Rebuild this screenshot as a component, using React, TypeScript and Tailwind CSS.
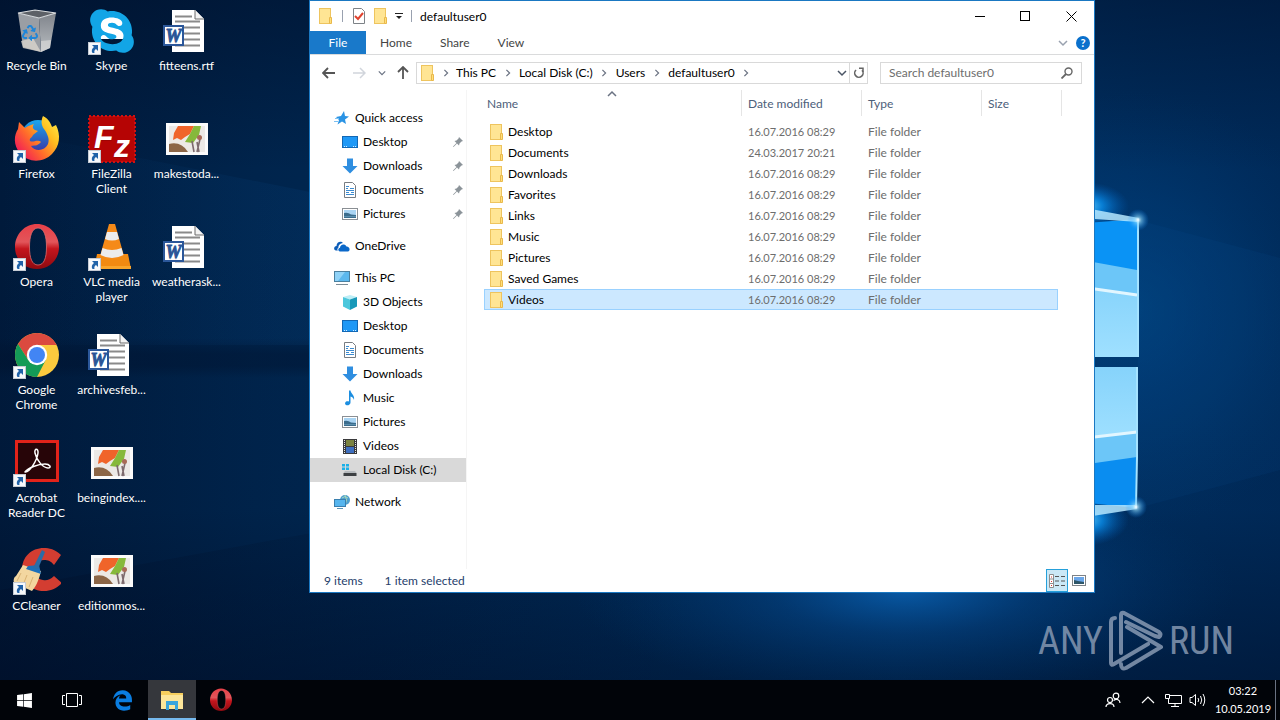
import { useState } from 'react';
import type { ReactNode } from 'react';
import { FaEdgeLegacy, FaRecycle, FaSkype, FaWindows } from 'react-icons/fa';

interface DesktopItem {
    label: string;
    icon: ReactNode;
    shortcut?: boolean;
}

interface NavItem {
    label: string;
    icon: ReactNode;
    top?: boolean;
    pinned?: boolean;
    spaced?: boolean;
}

/* ---------- Desktop icons (48x48) ---------- */

function RecycleBinIcon() {
    return (
        <div className="relative size-12">
            <svg viewBox="0 0 48 48" className="size-12">
                <defs>
                    <linearGradient id="binSide" x1="0" y1="0" x2="0" y2="1">
                        <stop offset="0" stopColor="#7f848b" />
                        <stop offset="1" stopColor="#b9bdc1" />
                    </linearGradient>
                </defs>
                <path d="M5 6 L26 11 L28 45 L10 40 Z" fill="#9a9ea4" />
                <path d="M26 11 L43 6 L37 41 L28 45 Z" fill="url(#binSide)" />
                <path d="M8 34 L20 31 L28 45 L10 41 Z" fill="#d9d5cd" opacity=".8" />
                <path d="M28 34 L38 33 L37 41 L28 45 Z" fill="#d8d8d8" opacity=".7" />
                <path d="M5 6 L22 3 L43 6 L26 11 Z" fill="#5d6167" stroke="#dadddf" strokeWidth="1.2" />
            </svg>
            <FaRecycle className="absolute top-[18px] left-[9px] size-4 text-[#1f86d9]" />
        </div>
    );
}

function SkypeIcon() {
    return (
        <div className="relative size-12">
            <div className="absolute top-2 left-3 size-6 bg-white" />
            <FaSkype className="absolute -top-px left-[-1px] size-[50px] text-[#12a5e6]" />
        </div>
    );
}

function WordIcon() {
    return (
        <svg viewBox="0 0 48 48" className="size-12">
            <path d="M9 3 H32 L41 12 V45 H9 Z" fill="#fff" />
            <path d="M32 3 V12 H41" fill="#f3f3f3" stroke="#6b6b6b" strokeWidth="1" />
            <path d="M12 9.5 H29 M12 14.5 H37 M21 20.5 H37 M21 26.5 H37 M21 32.5 H37 M12 38.5 H37" stroke="#8a8a8a" strokeWidth="2" />
            <rect x="1" y="19" width="19" height="19" fill="#fff" stroke="#2b579a" strokeWidth="2" />
            <text x="10.5" y="35" textAnchor="middle" fontFamily="Liberation Serif, serif" fontWeight="700" fontStyle="italic" fontSize="18" fill="#2b579a" stroke="#2b579a" strokeWidth=".8">W</text>
        </svg>
    );
}

function ThumbIcon() {
    return (
        <svg viewBox="0 0 48 48" className="size-12">
            <rect x="3" y="8" width="42" height="32" fill="#fbfbfb" />
            <rect x="6" y="11" width="36" height="26" fill="#ece9e6" />
            <path d="M15 11 H31 L27 19 L22 22 L18 25 L14 23 L10 25 L11 18 Z" fill="#f0642a" />
            <path d="M31 11 H38 L36 20 L30 28 L22 27 L27 19 Z" fill="#86b93b" />
            <path d="M6 29 Q18 26 25 37 H6 Z" fill="#8c6647" />
            <path d="M29 26 L31 37 M37 24 L34 37 M34 27 L36 37" stroke="#7d6a6e" strokeWidth="1.6" />
            <circle cx="36.5" cy="22.5" r="2.5" fill="#a86a56" />
        </svg>
    );
}

function FirefoxIcon() {
    return (
        <svg viewBox="0 0 48 48" className="size-12">
            <defs>
                <linearGradient id="foxBody" x1="1" y1="0" x2="0" y2=".8">
                    <stop offset="0" stopColor="#fff44f" />
                    <stop offset=".35" stopColor="#ffbd1f" />
                    <stop offset=".65" stopColor="#ff6a2b" />
                    <stop offset="1" stopColor="#f0125f" />
                </linearGradient>
                <linearGradient id="foxGlobe" x1="0" y1="0" x2="0" y2="1">
                    <stop offset="0" stopColor="#1aa7ee" />
                    <stop offset="1" stopColor="#3b2fa0" />
                </linearGradient>
            </defs>
            <circle cx="25" cy="22" r="17" fill="url(#foxGlobe)" />
            <path d="M30 1 C36 4 38 9 39 12 L43 10 C48 20 47 31 39 39 C30 48 15 48 7 38 C0 30 1 20 5 14 L6 7 L12 13 C14 11 18 10 21 9 C19 12 20 14 22 15 L25 16 L20 20 C19 23 16 23 17 26 C20 28 24 24 28 27 C24 32 20 30 18 31 C22 37 32 36 35 29 C37 24 34 18 31 14 C28 10 28 5 30 1 Z" fill="url(#foxBody)" />
        </svg>
    );
}

function FileZillaIcon() {
    return (
        <svg viewBox="0 0 48 48" className="size-12">
            <rect x="1" y="1" width="46" height="46" fill="#b50404" stroke="#d01212" strokeWidth="2" strokeDasharray="2 2" />
            <rect x="2" y="2" width="44" height="44" fill="#b50404" />
            <text x="6" y="33" fontFamily="Liberation Sans, sans-serif" fontWeight="700" fontStyle="italic" fontSize="32" fill="#fff">F</text>
            <text x="26" y="42" fontFamily="Liberation Sans, sans-serif" fontWeight="700" fontStyle="italic" fontSize="32" fill="#fff">z</text>
        </svg>
    );
}

function OperaIcon({ size }: { size: 'big' | 'small' }) {
    return (
        <svg viewBox="0 0 48 48" className={size === 'big' ? 'size-12' : 'size-6'}>
            <defs>
                <linearGradient id="operaRing" x1="0" y1="0" x2="0" y2="1">
                    <stop offset="0" stopColor="#e84048" />
                    <stop offset=".4" stopColor="#e2555a" />
                    <stop offset=".55" stopColor="#c4151d" />
                    <stop offset="1" stopColor="#8e0a10" />
                </linearGradient>
            </defs>
            <path d="M24 1 C36 1 46 11 46 24 C46 37 36 46 24 46 C12 46 2 37 2 24 C2 11 12 1 24 1 Z M25 5 C19 5 16.5 13 16.5 24 C16.5 35 19 42 25 42 C31 42 33.5 35 33.5 24 C33.5 13 31 5 25 5 Z" fill="url(#operaRing)" fillRule="evenodd" />
            <path d="M25 5 C19 5 16.5 13 16.5 24 C16.5 35 19 42 25 42 C31 42 33.5 35 33.5 24 C33.5 13 31 5 25 5 Z" fill="none" stroke="#e06c6c" strokeWidth=".8" />
        </svg>
    );
}

function VlcIcon() {
    return (
        <svg viewBox="0 0 48 48" className="size-12">
            <path d="M9 31 H40 L43 46 H6 Z" fill="#f28a11" />
            <path d="M6 43 H43 V46 H6 Z" fill="#f9a52b" />
            <path d="M21 1 H27 L36 33 Q24 40 12 33 Z" fill="#f58a18" />
            <path d="M19 9 H29 L31 16 Q24 19 17 16 Z" fill="#ececec" />
            <path d="M14.5 25 Q24 29 33.5 25 L35.5 32 Q24 38 12.5 32 Z" fill="#ececec" />
        </svg>
    );
}

function ChromeIcon() {
    return (
        <svg viewBox="0 0 48 48" className="size-12">
            <circle cx="24" cy="24" r="22" fill="#fbca3e" />
            <path d="M4.95 13 A22 22 0 0 1 43.7 14 H24 L15.3 29 Z" fill="#db4a3f" />
            <path d="M4.95 13 A22 22 0 0 0 24 46 L32.7 29 L24 34 L15.3 29 Z" fill="#149b57" />
            <circle cx="24" cy="24" r="10.2" fill="#fff" />
            <circle cx="24" cy="24" r="8" fill="#4285f4" />
        </svg>
    );
}

function AcrobatIcon() {
    return (
        <svg viewBox="0 0 48 48" className="size-12">
            <rect x="3.5" y="2.5" width="41" height="39" fill="#270508" stroke="#e2231a" strokeWidth="3" />
            <path d="M12 33 C16 34 24 22 25 14 C25.5 9 21 9 22 14 C23.5 21 30 29 35 29 C39 29 37 25 32 25 C25 25 15 29 12 33 Z" fill="none" stroke="#fff" strokeWidth="1.5" strokeLinejoin="round" />
        </svg>
    );
}

function CCleanerIcon() {
    return (
        <svg viewBox="0 0 48 48" className="size-12">
            <path d="M48 8 C42 2 36 1 31 1 C18 1 9 10 9 23 C9 36 19 44 31 44 C38 44 44 41 49 36 L41 29 C37 33 33 34 30 33 C24 32 21 28 21 23 C21 17 25 13 31 13 C35 13 38 14 41 18 Z" fill="#d33d31" />
            <path d="M10 18 L28 24 C26 32 24 38 19 44 L1 36 C0 33 1 30 3 29 Z" fill="#f3d7a0" />
            <path d="M8 26 L4 34 M14 28 L10 38 M20 30 L16 40" stroke="#d9b374" strokeWidth="1" />
            <path d="M15 19 L26 18 L28 27 L13 22 Z" fill="#1d6fb9" />
            <path d="M29 3 L32 5 L25 22 L20 21 Z" fill="#2b6ca6" />
        </svg>
    );
}

function ShortcutBadge() {
    return (
        <svg viewBox="0 0 13 13" className="absolute bottom-0 left-0 size-[13px]">
            <rect x=".5" y=".5" width="12" height="12" fill="#f6f8fb" stroke="#c5cbd3" />
            <path d="M4 3 H10 V9 L8 7 C6.5 8 6 9 6.5 11 H4.5 C3 9 4 6.5 6 5 Z" fill="#2062a8" />
        </svg>
    );
}

/* ---------- Explorer icons (16x16) ---------- */

function FolderIcon() {
    return (
        <svg viewBox="0 0 16 16" className="size-4 shrink-0">
            <rect x="1.5" y=".5" width="11" height="15" fill="#ffe594" stroke="#eec45e" />
            <path d="M11.5 9.5 H13.5 V15.5 H11.5 Z" fill="#ffe07a" stroke="#e9b84c" />
        </svg>
    );
}

function StarIcon() {
    return (
        <svg viewBox="0 0 16 16" className="size-4 shrink-0">
            <path d="M10 1 L11 6 L15 6.5 L11 9.5 L12 14 L8 11.5 L3.5 14.5 L5 10 L2 7 L7 6 Z" fill="#2a93e4" />
            <path d="M1 8.5 H5 M0 11.5 H4" stroke="#7cc0f2" />
        </svg>
    );
}

function DesktopIcon() {
    return (
        <svg viewBox="0 0 16 16" className="size-4 shrink-0">
            <rect x=".5" y="2.5" width="15" height="11" fill="#1e98f6" stroke="#1267b4" />
            <path d="M2 12.5 H5 M11 12.5 H14" stroke="#d4ecff" strokeDasharray="1 1" />
        </svg>
    );
}

function DownloadIcon() {
    return (
        <svg viewBox="0 0 16 16" className="size-4 shrink-0">
            <path d="M5 .5 H11 V8 H15.5 L8 15.5 L.5 8 H5 Z" fill="#2f8ee0" />
        </svg>
    );
}

function DocumentIcon() {
    return (
        <svg viewBox="0 0 16 16" className="size-4 shrink-0">
            <path d="M2.5 .5 H10.5 L13.5 3.5 V15.5 H2.5 Z" fill="#fff" stroke="#777c82" />
            <path d="M4 4.5 H7 M4 6.5 H6 M8 6.5 H12 M4 8.5 H12 M4 10.5 H7 M9 10.5 H12 M4 12.5 H12" stroke="#3c8bd0" />
        </svg>
    );
}

function PictureIcon() {
    return (
        <svg viewBox="0 0 16 16" className="size-4 shrink-0">
            <rect x=".5" y="2.5" width="15" height="11" fill="#fff" stroke="#8a8f94" />
            <rect x="2" y="4" width="12" height="8" fill="#a9d4f3" />
            <path d="M2 7 Q6 6 9 8.5 L14 9 V12 H2 Z" fill="#3c6d8d" />
            <path d="M2 10.5 H14" stroke="#5b8fae" />
        </svg>
    );
}

function OneDriveIcon() {
    return (
        <svg viewBox="0 0 16 16" className="size-4 shrink-0">
            <path d="M2 12.5 C-1 12 0 8 2.5 8 C2.5 4 7 2.5 9 5 C5.5 5.5 4 8 4.5 9.5 C3 10.5 3 12 4 12.5 Z" fill="#0b5cb8" />
            <path d="M6 13.5 C3.5 13 4 10 6 9.8 C6 6.5 10.5 5 12.5 8.5 C16 8.5 16.5 13 14 13.5 Z" fill="#0b68c9" />
        </svg>
    );
}

function ThisPcIcon() {
    return (
        <svg viewBox="0 0 16 16" className="size-4 shrink-0">
            <rect x=".5" y="1.5" width="15" height="10" fill="#5cb8ee" stroke="#4b7f9e" />
            <path d="M1 2 H11 L4 11 H1 Z" fill="#8fd2f7" />
            <path d="M2 14.5 H14" stroke="#7b8b96" />
        </svg>
    );
}

function CubeIcon() {
    return (
        <svg viewBox="0 0 16 16" className="size-4 shrink-0">
            <path d="M1 3 L8 1 L15 3 L8 5.5 Z" fill="#bdeef6" />
            <path d="M1 3 L8 5.5 V16 L1 12.5 Z" fill="#4cc7dc" />
            <path d="M15 3 L8 5.5 V16 L15 12.5 Z" fill="#1898b8" />
        </svg>
    );
}

function MusicIcon() {
    return (
        <svg viewBox="0 0 16 16" className="size-4 shrink-0">
            <path d="M7 .5 H8.5 C9 4 13 5 12 10 C11.5 8 10.5 7 8.5 6.5 V12.5 C8.5 14.5 6.5 15.5 4.8 15.3 C2.5 15 2.5 12 4.8 11.3 C5.8 11 6.5 11.2 7 11.5 Z" fill="#1c8ee0" />
        </svg>
    );
}

function VideoIcon() {
    return (
        <svg viewBox="0 0 16 16" className="size-4 shrink-0">
            <rect x="1" y="1" width="14" height="15" fill="#3a3a3c" />
            <path d="M2.5 2 V15 M13.5 2 V15" stroke="#e6e6e6" strokeDasharray="1 1" />
            <rect x="4" y="2" width="8" height="6" fill="#7b8340" />
            <rect x="4" y="9" width="8" height="6" fill="#3e6fc0" />
        </svg>
    );
}

function DiskIcon() {
    return (
        <svg viewBox="0 0 16 16" className="size-4 shrink-0">
            <path d="M0 2 H3 V4.5 H0 Z M4 2 H7 V4.5 H4 Z M0 5.5 H3 V8 H0 Z M4 5.5 H7 V8 H4 Z" fill="#1ab0e8" />
            <path d="M3 9 H13 L14.5 11 H1.5 Z" fill="#b6babd" />
            <rect x="1.5" y="11" width="13" height="3" fill="#3d4043" />
        </svg>
    );
}

function NetworkIcon() {
    return (
        <svg viewBox="0 0 16 16" className="size-4 shrink-0">
            <circle cx="11" cy="6" r="5" fill="#4d9fcf" />
            <path d="M8 4 Q11 1 14 4 M11 1 Q14 6 11 11" stroke="#a8d8b9" fill="none" />
            <rect x=".5" y="5.5" width="11" height="7" fill="#56b5ee" stroke="#3a7fae" />
            <path d="M3 14.5 H9" stroke="#5b94b6" />
        </svg>
    );
}

function PinIcon() {
    return (
        <svg viewBox="0 0 12 12" className="size-3">
            <path d="M7 1 L11 5 L9.5 5.5 L7.5 7.5 L7 9.5 L5 7.5 L1.5 11 L1 10.5 L4.5 7 L2.5 5 L4.5 4.5 L6.5 2.5 Z" fill="#8b9399" />
        </svg>
    );
}

function Chevron({ className }: { className: string }) {
    return (
        <svg viewBox="0 0 10 10" className={className}>
            <path d="M1 3 L5 7 L9 3" fill="none" stroke="currentColor" strokeWidth="1.5" />
        </svg>
    );
}

/* ---------- Data ---------- */

const desktopItems: DesktopItem[] = [
    { label: 'Recycle Bin', icon: <RecycleBinIcon /> },
    { label: 'Firefox', icon: <FirefoxIcon />, shortcut: true },
    { label: 'Opera', icon: <OperaIcon size="big" />, shortcut: true },
    { label: 'Google Chrome', icon: <ChromeIcon />, shortcut: true },
    { label: 'Acrobat Reader DC', icon: <AcrobatIcon />, shortcut: true },
    { label: 'CCleaner', icon: <CCleanerIcon />, shortcut: true },
    { label: 'Skype', icon: <SkypeIcon />, shortcut: true },
    { label: 'FileZilla Client', icon: <FileZillaIcon />, shortcut: true },
    { label: 'VLC media player', icon: <VlcIcon />, shortcut: true },
    { label: 'archivesfeb...', icon: <WordIcon /> },
    { label: 'beingindex....', icon: <ThumbIcon /> },
    { label: 'editionmos...', icon: <ThumbIcon /> },
    { label: 'fitteens.rtf', icon: <WordIcon /> },
    { label: 'makestoda...', icon: <ThumbIcon /> },
    { label: 'weatherask...', icon: <WordIcon /> },
];

const navItems: NavItem[] = [
    { label: 'Quick access', icon: <StarIcon />, top: true },
    { label: 'Desktop', icon: <DesktopIcon />, pinned: true },
    { label: 'Downloads', icon: <DownloadIcon />, pinned: true },
    { label: 'Documents', icon: <DocumentIcon />, pinned: true },
    { label: 'Pictures', icon: <PictureIcon />, pinned: true },
    { label: 'OneDrive', icon: <OneDriveIcon />, top: true, spaced: true },
    { label: 'This PC', icon: <ThisPcIcon />, top: true, spaced: true },
    { label: '3D Objects', icon: <CubeIcon /> },
    { label: 'Desktop', icon: <DesktopIcon /> },
    { label: 'Documents', icon: <DocumentIcon /> },
    { label: 'Downloads', icon: <DownloadIcon /> },
    { label: 'Music', icon: <MusicIcon /> },
    { label: 'Pictures', icon: <PictureIcon /> },
    { label: 'Videos', icon: <VideoIcon /> },
    { label: 'Local Disk (C:)', icon: <DiskIcon /> },
    { label: 'Network', icon: <NetworkIcon />, top: true, spaced: true },
];

const files = [
    { name: 'Desktop', modified: '16.07.2016 08:29' },
    { name: 'Documents', modified: '24.03.2017 20:21' },
    { name: 'Downloads', modified: '16.07.2016 08:29' },
    { name: 'Favorites', modified: '16.07.2016 08:29' },
    { name: 'Links', modified: '16.07.2016 08:29' },
    { name: 'Music', modified: '16.07.2016 08:29' },
    { name: 'Pictures', modified: '16.07.2016 08:29' },
    { name: 'Saved Games', modified: '16.07.2016 08:29' },
    { name: 'Videos', modified: '16.07.2016 08:29' },
];

/* ---------- Wallpaper ---------- */

function Wallpaper() {
    return (
        <svg viewBox="0 0 1280 680" preserveAspectRatio="xMaxYMid slice" className="absolute inset-0 size-full" aria-hidden="true">
            <defs>
                <linearGradient id="sky" x1="0" y1="0" x2="1" y2="0">
                    <stop offset="0" stopColor="#001a3b" />
                    <stop offset=".2" stopColor="#00244c" />
                    <stop offset=".7" stopColor="#003468" />
                    <stop offset="1" stopColor="#002a59" />
                </linearGradient>
                <linearGradient id="vignette" x1="0" y1="0" x2="0" y2="1">
                    <stop offset="0" stopColor="#000c24" stopOpacity=".45" />
                    <stop offset=".25" stopColor="#000c24" stopOpacity="0" />
                    <stop offset=".75" stopColor="#000c24" stopOpacity=".05" />
                    <stop offset="1" stopColor="#000c24" stopOpacity=".5" />
                </linearGradient>
                <radialGradient id="halo" cx="1130" cy="310" r="220" gradientUnits="userSpaceOnUse">
                    <stop offset="0" stopColor="#0060ae" stopOpacity=".35" />
                    <stop offset=".5" stopColor="#0054a0" stopOpacity=".2" />
                    <stop offset="1" stopColor="#003c78" stopOpacity="0" />
                </radialGradient>
                <radialGradient id="floor">
                    <stop offset="0" stopColor="#0a66ba" stopOpacity=".8" />
                    <stop offset=".4" stopColor="#06509a" stopOpacity=".4" />
                    <stop offset="1" stopColor="#003c78" stopOpacity="0" />
                </radialGradient>
                <radialGradient id="flare">
                    <stop offset="0" stopColor="#6fd6ff" />
                    <stop offset=".4" stopColor="#0a9bff" stopOpacity=".7" />
                    <stop offset="1" stopColor="#0060c0" stopOpacity="0" />
                </radialGradient>
                <radialGradient id="spark">
                    <stop offset="0" stopColor="#fff" />
                    <stop offset=".3" stopColor="#8fdcff" stopOpacity=".6" />
                    <stop offset="1" stopColor="#0a8bff" stopOpacity="0" />
                </radialGradient>
                <linearGradient id="pane" x1="0" y1="0" x2="0" y2="1">
                    <stop offset="0" stopColor="#86d3fb" />
                    <stop offset="1" stopColor="#9fe0ff" />
                </linearGradient>
                <linearGradient id="beam" x1="0" y1="0" x2="1" y2="0">
                    <stop offset="0" stopColor="#0a4c8c" stopOpacity="0" />
                    <stop offset="1" stopColor="#0a4c8c" stopOpacity=".3" />
                </linearGradient>
                <linearGradient id="shade" x1="0" y1="0" x2="1" y2="0">
                    <stop offset="0" stopColor="#000c24" stopOpacity=".25" />
                    <stop offset="1" stopColor="#000c24" stopOpacity="0" />
                </linearGradient>
                <linearGradient id="band" x1="0" y1="0" x2="0" y2="1">
                    <stop offset="0" stopColor="#00112c" stopOpacity="0" />
                    <stop offset=".4" stopColor="#00112c" stopOpacity=".4" />
                    <stop offset=".7" stopColor="#00112c" stopOpacity=".4" />
                    <stop offset="1" stopColor="#00112c" stopOpacity="0" />
                </linearGradient>
            </defs>
            <rect width="1280" height="680" fill="url(#sky)" />
            <rect width="1280" height="680" fill="url(#vignette)" />
            <path d="M0 130 L600 250 V345 H0 Z" fill="url(#beam)" />
            <path d="M0 338 H600 V378 H0 Z" fill="url(#band)" />
            <path d="M700 462 L0 590 V680 H700 Z" fill="url(#shade)" />
            <ellipse cx="905" cy="590" rx="330" ry="110" fill="url(#floor)" />
            <rect x="830" width="450" height="680" fill="url(#halo)" />
            <path d="M1138 220 L1280 258 V470 L1138 508 Z" fill="#0a66b4" opacity=".08" />
            <ellipse cx="1085" cy="206" rx="44" ry="24" fill="url(#flare)" />
            <ellipse cx="1085" cy="520" rx="44" ry="26" fill="url(#flare)" />
            {/* Window panes */}
            <path d="M1060 225 L1138 219 V357 H1060 Z" fill="#0a93f5" />
            <path d="M1060 256 L1137 270 V357 H1060 Z" fill="#6cc6f8" />
            <path d="M1060 284 L1137 294 V357 H1060 Z" fill="url(#pane)" />
            <path d="M1060 284 L1137 295" stroke="#e2f6ff" strokeWidth="3" />
            <path d="M1060 367 H1137 L1136 508 L1060 500 Z" fill="#0a8df0" />
            <path d="M1060 367 H1137 V457 L1060 468 Z" fill="#6cc6f8" />
            <path d="M1060 367 H1137 V433 L1060 440 Z" fill="url(#pane)" />
            <path d="M1060 441 L1137 432" stroke="#e2f6ff" strokeWidth="3" />
            <path d="M1138 219 V357 M1137 367 V457 L1136 508" stroke="#a5e3ff" strokeWidth="2" fill="none" />
            <path d="M1080 207 L1139 218 L1138 222 L1080 218 Z" fill="#b5e8ff" opacity=".85" />
            <path d="M1080 518 L1137 509 L1136 505 L1080 505 Z" fill="#b5e8ff" opacity=".85" />
            <circle cx="1138" cy="220" r="11" fill="url(#spark)" />
            <circle cx="1136" cy="507" r="11" fill="url(#spark)" />
        </svg>
    );
}

/* ---------- Explorer window ---------- */

function TitleBar() {
    return (
        <header className="flex h-[30px] shrink-0 items-center pl-2">
            <FolderIcon />
            <span className="mx-2 h-3 w-px bg-gray-400" />
            <button aria-label="Properties">
                <svg viewBox="0 0 16 16" className="size-4">
                    <path d="M2.5 .5 H10.5 L13.5 3.5 V15.5 H2.5 Z" fill="#fff" stroke="#7d8287" />
                    <path d="M4 8 L7 11 L12 5" fill="none" stroke="#e0432e" strokeWidth="2" />
                </svg>
            </button>
            <button aria-label="New folder" className="ml-1.5">
                <FolderIcon />
            </button>
            <button aria-label="Customize Quick Access Toolbar" className="ml-1.5">
                <svg viewBox="0 0 8 8" className="size-2">
                    <path d="M0 1.5 H8" stroke="#222" />
                    <path d="M1 4 H7 L4 7 Z" fill="#222" />
                </svg>
            </button>
            <span className="mx-2 h-3 w-px bg-gray-400" />
            <h1>defaultuser0</h1>
            <div className="ml-auto flex h-full">
                <button aria-label="Minimize" className="flex w-[46px] items-center justify-center">
                    <svg viewBox="0 0 11 11" className="size-[11px]">
                        <path d="M0 5.5 H10" stroke="#000" />
                    </svg>
                </button>
                <button aria-label="Maximize" className="flex w-[45px] items-center justify-center">
                    <svg viewBox="0 0 11 11" className="size-[11px]">
                        <rect x=".5" y=".5" width="9" height="9" fill="none" stroke="#000" />
                    </svg>
                </button>
                <button aria-label="Close" className="flex w-[46px] items-center justify-center">
                    <svg viewBox="0 0 11 11" className="size-[11px]">
                        <path d="M.5 .5 L10.5 10.5 M10.5 .5 L.5 10.5" stroke="#000" />
                    </svg>
                </button>
            </div>
        </header>
    );
}

function Ribbon() {
    return (
        <div className="flex h-6 shrink-0 items-stretch border-b border-[#dadbdc] text-[#444]">
            <button className="w-14 bg-[#1979ca] text-white">File</button>
            <button className="px-[14px]">Home</button>
            <button className="px-[14px]">Share</button>
            <button className="px-[14px]">View</button>
            <div className="ml-auto flex items-center gap-2 pr-1">
                <button aria-label="Expand the Ribbon">
                    <Chevron className="size-2.5 text-gray-400" />
                </button>
                <button aria-label="Help" className="size-3.5 rounded-full bg-[#0a70cc] text-[11px] leading-[14px] font-bold text-white">?</button>
            </div>
        </div>
    );
}

function AddressBar() {
    const crumbs = ['This PC', 'Local Disk (C:)', 'Users', 'defaultuser0'];
    return (
        <div className="flex h-[35px] shrink-0 items-center pr-3">
            <div className="flex w-[106px] shrink-0 items-center text-[#555]">
                <button aria-label="Back" className="ml-3">
                    <svg viewBox="0 0 14 14" className="size-3.5">
                        <path d="M1 7 H13 M6 2 L1 7 L6 12" fill="none" stroke="currentColor" strokeWidth="1.8" />
                    </svg>
                </button>
                <button aria-label="Forward" className="ml-4 text-gray-300">
                    <svg viewBox="0 0 14 14" className="size-3.5">
                        <path d="M1 7 H13 M8 2 L13 7 L8 12" fill="none" stroke="currentColor" strokeWidth="1.5" />
                    </svg>
                </button>
                <button aria-label="Recent locations" className="ml-3">
                    <Chevron className="size-2 text-gray-500" />
                </button>
                <button aria-label="Up" className="ml-2.5">
                    <svg viewBox="0 0 14 14" className="size-3.5">
                        <path d="M7 13 V1 M2 6 L7 1 L12 6" fill="none" stroke="currentColor" strokeWidth="1.8" />
                    </svg>
                </button>
            </div>
            <nav aria-label="Address" className="flex h-[22px] flex-1 items-center border border-[#d9d9d9] pl-[3px]">
                <FolderIcon />
                <span className="flex w-5 justify-center">
                    <Chevron className="size-2 -rotate-90 text-gray-500" />
                </span>
                {crumbs.map((crumb) => (
                    <div key={crumb} className="flex items-center">
                        <button>{crumb}</button>
                        <span className="flex w-[23px] justify-center">
                            <Chevron className="size-2 -rotate-90 text-gray-500" />
                        </span>
                    </div>
                ))}
                <button aria-label="Previous locations" className="mr-0.5 ml-auto">
                    <Chevron className="size-2.5 text-gray-600" />
                </button>
                <button aria-label="Refresh" className="flex h-full w-[18px] items-center justify-center border-l border-[#d9d9d9]">
                    <svg viewBox="0 0 12 12" className="size-3">
                        <path d="M3 3 A4.2 4.2 0 1 0 9 3.2" fill="none" stroke="#666" strokeWidth="1.6" />
                        <path d="M6 1.2 H10 V5" fill="none" stroke="#666" strokeWidth="1.5" />
                    </svg>
                </button>
            </nav>
            <label className="ml-3 flex h-[22px] w-[202px] items-center border border-[#d9d9d9] px-2">
                <input
                    type="text"
                    aria-label="Search"
                    placeholder="Search defaultuser0"
                    className="min-w-0 flex-1 outline-none placeholder:text-[#6d6d6d]"
                />
                <svg viewBox="0 0 12 12" className="size-3">
                    <circle cx="7.5" cy="4.5" r="3.5" fill="none" stroke="#666" strokeWidth="1.4" />
                    <path d="M5 7 L.5 11.5" stroke="#666" strokeWidth="1.8" />
                </svg>
            </label>
        </div>
    );
}

function NavPane() {
    return (
        <nav aria-label="Navigation pane" className="w-[157px] shrink-0 border-r border-[#f5f5f5] pt-4">
            <ul>
                {navItems.map((item, index) => (
                    <li key={index} className={item.spaced ? 'mt-2' : ''}>
                        <button
                            className={`flex h-6 w-full items-center gap-[5px] pr-0.5 ${item.top ? 'pl-6' : 'pl-8'} ${item.label.startsWith('Local') ? 'bg-[#d9d9d9]' : ''}`}
                        >
                            {item.icon}
                            <span className="pb-px">{item.label}</span>
                            {item.pinned && <span className="ml-auto"><PinIcon /></span>}
                        </button>
                    </li>
                ))}
            </ul>
        </nav>
    );
}

function FileList() {
    const [selected, setSelected] = useState('Videos');
    const edge = 'border-y border-[#99d1ff] bg-[#cce8ff]';
    const plain = 'border-y border-transparent';

    return (
        <div className="min-w-0 flex-1 pl-[17px]">
            <table className="w-[578px] table-fixed border-separate border-spacing-0 text-left">
                <colgroup>
                    <col className="w-[258px]" />
                    <col className="w-[120px]" />
                    <col className="w-[120px]" />
                    <col className="w-[76px]" />
                    <col className="w-1" />
                </colgroup>
                <thead className="text-[#4c607a]">
                    <tr className="h-[26px]">
                        <th className="relative border-r border-[#e5e5e5] pl-[3px] font-normal">
                            Name
                            <Chevron className="absolute -top-px left-[123px] size-2.5 rotate-180 text-gray-500" />
                        </th>
                        <th className="border-r border-[#e5e5e5] pl-1.5 font-normal">Date modified</th>
                        <th className="border-r border-[#e5e5e5] pl-1.5 font-normal">Type</th>
                        <th colSpan={2} className="border-r border-[#e5e5e5] pl-1.5 font-normal">Size</th>
                    </tr>
                    <tr aria-hidden="true" className="h-[5px]" />
                </thead>
                <tbody>
                    {files.map((file) => {
                        const tone = file.name === selected ? edge : plain;
                        return (
                            <tr key={file.name} onClick={() => setSelected(file.name)} className="h-[21px] text-[#6d6d6d]">
                                <td className={`border-l pl-1 text-black ${tone}`}>
                                    <span className="flex items-center gap-[3px]">
                                        <FolderIcon />
                                        {file.name}
                                    </span>
                                </td>
                                <td className={`pl-1.5 text-[11px] ${tone}`}>{file.modified}</td>
                                <td className={`pl-1.5 ${tone}`}>File folder</td>
                                <td className={`border-r ${tone}`} />
                            </tr>
                        );
                    })}
                </tbody>
            </table>
        </div>
    );
}

function StatusBar() {
    return (
        <footer className="flex h-[23px] shrink-0 items-center pl-3.5 text-[#26406b]">
            <span>9 items</span>
            <span className="ml-[22px]">1 item selected</span>
            <div className="ml-auto flex h-full items-center pr-1">
                <button aria-label="Details view" className="flex h-full w-[22px] items-center justify-center border border-[#26a0da] bg-[#cbe8f6]">
                    <svg viewBox="0 0 16 14" className="h-3.5 w-4">
                        <path d="M.5 .5 H4.5 V13.5 H.5 Z M.5 5 H4.5 M.5 9.5 H4.5" fill="#fff" stroke="#8d8d8d" />
                        <path d="M2 3 H3 M2 7.5 H3 M2 11.5 H3" stroke="#d33" />
                        <path d="M6 2.5 H10 M12 2.5 H16 M6 7 H10 M12 7 H16 M6 11.5 H10 M12 11.5 H16" stroke="#555" />
                    </svg>
                </button>
                <button aria-label="Large icons view" className="flex h-full w-[22px] items-center justify-center">
                    <svg viewBox="0 0 14 12" className="h-3 w-3.5">
                        <rect x=".5" y=".5" width="13" height="10" fill="#fff" stroke="#7d8287" />
                        <rect x="2" y="2" width="10" height="7" fill="#6ba7ea" />
                        <path d="M2 5 L6 6 L12 7 V9 H2 Z" fill="#2d5568" />
                    </svg>
                </button>
            </div>
        </footer>
    );
}

function Watermark() {
    return (
        <div className="absolute right-[46px] bottom-2 flex items-center gap-1.5 font-['Roboto_Condensed','Liberation_Sans_Narrow',Roboto,sans-serif] text-[38px] leading-none text-slate-400/80">
            <span>ANY</span>
            <svg viewBox="0 0 54 62" className="h-[62px] w-[54px]" fill="none" stroke="currentColor" strokeWidth="4" strokeLinejoin="round" strokeLinecap="round">
                <path d="M6 8 Q2 8 2 12 V53 Q2 56 5 54 L39 34 M12 43 V5 Q12 2 15 3 L50 22 Q53 25 50 27 L46 26 L17 12 M12 54 Q12 60 17 58 L52 37 L18 17" />
            </svg>
            <span>RUN</span>
        </div>
    );
}

function Taskbar() {
    return (
        <footer className="flex h-10 shrink-0 items-stretch bg-[#010409] text-white">
            <button aria-label="Start" className="flex w-12 items-center justify-center">
                <FaWindows className="size-[17px]" />
            </button>
            <button aria-label="Task View" className="flex w-12 items-center justify-center">
                <svg viewBox="0 0 20 16" className="h-4 w-5" fill="none" stroke="#fff">
                    <path d="M4.5 1.5 H15.5 V14.5 H4.5 Z M3 3.5 H.5 V12.5 H3 M17 3.5 H19.5 V12.5 H17" />
                </svg>
            </button>
            <button aria-label="Microsoft Edge" className="flex w-[52px] items-center justify-center">
                <FaEdgeLegacy className="size-[21px] text-[#0a7de0]" />
            </button>
            <button aria-label="File Explorer" className="flex w-12 items-center justify-center border-b-2 border-[#76b9ed] bg-[#35373c] pt-0.5">
                <svg viewBox="0 0 24 20" className="h-5 w-6">
                    <path d="M1 1 H9 L11 3 H23 V19 H1 Z" fill="#f7cf5e" />
                    <path d="M1 5 H23 V19 H1 Z" fill="#fde69a" />
                    <path d="M6 11 H18 V20 H15 V15 H9 V20 H6 Z" fill="#3aa5dc" />
                </svg>
            </button>
            <button aria-label="Opera" className="flex w-[50px] items-center justify-center">
                <OperaIcon size="small" />
            </button>
            <div className="ml-auto flex items-center">
                <button aria-label="People" className="mr-5">
                    <svg viewBox="0 0 16 16" className="size-4" fill="none" stroke="#fff" strokeWidth="1.2">
                        <circle cx="5" cy="8" r="2.5" />
                        <path d="M1 15 C1 11 9 10 9 15" />
                        <circle cx="11" cy="4" r="2.8" />
                        <path d="M8.5 8.5 C12 6 15 8 15 11" />
                    </svg>
                </button>
                <button aria-label="Show hidden icons" className="mr-2.5">
                    <svg viewBox="0 0 14 8" className="h-2 w-3.5" fill="none" stroke="#fff" strokeWidth="1.2">
                        <path d="M1 7 L7 1 L13 7" />
                    </svg>
                </button>
                <button aria-label="Network" className="mr-[7px]">
                    <svg viewBox="0 0 17 15" className="h-[15px] w-[17px]" fill="none" stroke="#fff">
                        <path d="M5 2.5 H16.5 V10.5 H3.5 V6 M10 10.5 V13.5 M6 13.5 H14" />
                        <path d="M.5 1.5 H4.5 V5.5 H.5 Z" />
                    </svg>
                </button>
                <button aria-label="Volume" className="mr-2">
                    <svg viewBox="0 0 17 14" className="h-3.5 w-[17px]" fill="none" stroke="#fff">
                        <path d="M1 4.5 H3 L6.5 1.5 V12.5 L3 9.5 H1 Z M9 5 Q10.5 7 9 9 M11.5 3 Q14 7 11.5 11 M14 1 Q17.5 7 14 13" />
                    </svg>
                </button>
                <time className="w-[58px] text-center text-[11px] leading-[18px]">
                    03:22
                    <br />
                    10.05.2019
                </time>
                <span className="mr-1 ml-[3px] h-10 w-px bg-gray-500" />
            </div>
        </footer>
    );
}

export default function App() {
    return (
        <div className="flex h-screen flex-col overflow-hidden font-[Lato,'Open_Sans',sans-serif] text-[12px] leading-[15px] text-black">
            <main className="relative min-h-0 flex-1 overflow-hidden bg-[#00204a]">
                <Wallpaper />
                <ul className="relative grid w-fit grid-flow-col grid-rows-[repeat(6,108px)] pt-[7px]">
                    {desktopItems.map((item) => (
                        <li key={item.label} className="w-[75px]">
                            <button className="flex w-full flex-col items-center gap-[3px] pr-0.5 text-white text-shadow-2xs">
                                <span className="relative size-12">
                                    {item.icon}
                                    {item.shortcut && <ShortcutBadge />}
                                </span>
                                <span className="w-full px-0.5">{item.label}</span>
                            </button>
                        </li>
                    ))}
                </ul>
                <Watermark />
                <section aria-label="File Explorer" className="absolute top-0 right-[185px] bottom-[87px] left-[309px] flex flex-col border border-[#1a78c2] bg-white">
                    <TitleBar />
                    <Ribbon />
                    <AddressBar />
                    <div className="flex min-h-0 flex-1">
                        <NavPane />
                        <FileList />
                    </div>
                    <StatusBar />
                </section>
            </main>
            <Taskbar />
        </div>
    );
}
